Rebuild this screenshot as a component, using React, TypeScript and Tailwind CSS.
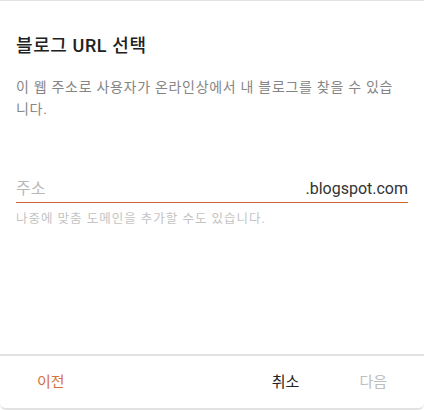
import React from "react";

const font = { fontFamily: "Roboto, 'Noto Sans CJK KR', sans-serif" };

export default function App() {
  return (
    <div
      className="w-[424px] h-[410px] bg-white flex flex-col border-t border-b-2 border-[#e2e2e2] rounded-b-md overflow-hidden"
      style={font}
    >
      <div className="flex-1 px-4 pt-[33px]">
        <h1 className="text-[18px] leading-6 font-medium tracking-[0.6px] text-[#212121]">블로그 URL 선택</h1>
        <p className="mt-[18px] pr-[8px] text-[14px] leading-[22px] tracking-[0.7px] text-[#858585]">
          이 웹 주소로 사용자가 온라인상에서 내 블로그를 찾을 수 있습니다.
        </p>
        <div className="mt-[57px] flex items-end border-b border-[#d0652f] pb-[1px]">
          <input
            className="flex-1 min-w-0 text-[16px] leading-6 outline-none placeholder:text-[#b8b8b8] text-[#212121] bg-transparent"
            placeholder="주소"
          />
          <span className="text-[16px] leading-6 text-[#333333]">.blogspot.com</span>
        </div>
        <p className="mt-[8px] text-[12.5px] leading-4 tracking-[1px] text-[#c4c4c4]">
          나중에 맞춤 도메인을 추가할 수도 있습니다.
        </p>
      </div>
      <div className="h-[54px] border-t-2 border-[#e2e2e2] flex items-center px-[21px] text-[15px]">
        <button className="px-4 py-2 text-[#d4703e]">이전</button>
        <div className="flex-1" />
        <button className="px-4 py-2 text-[#222222]">취소</button>
        <button className="px-4 py-2 text-[#bdbdbd] ml-[28px]">다음</button>
      </div>
    </div>
  );
}
